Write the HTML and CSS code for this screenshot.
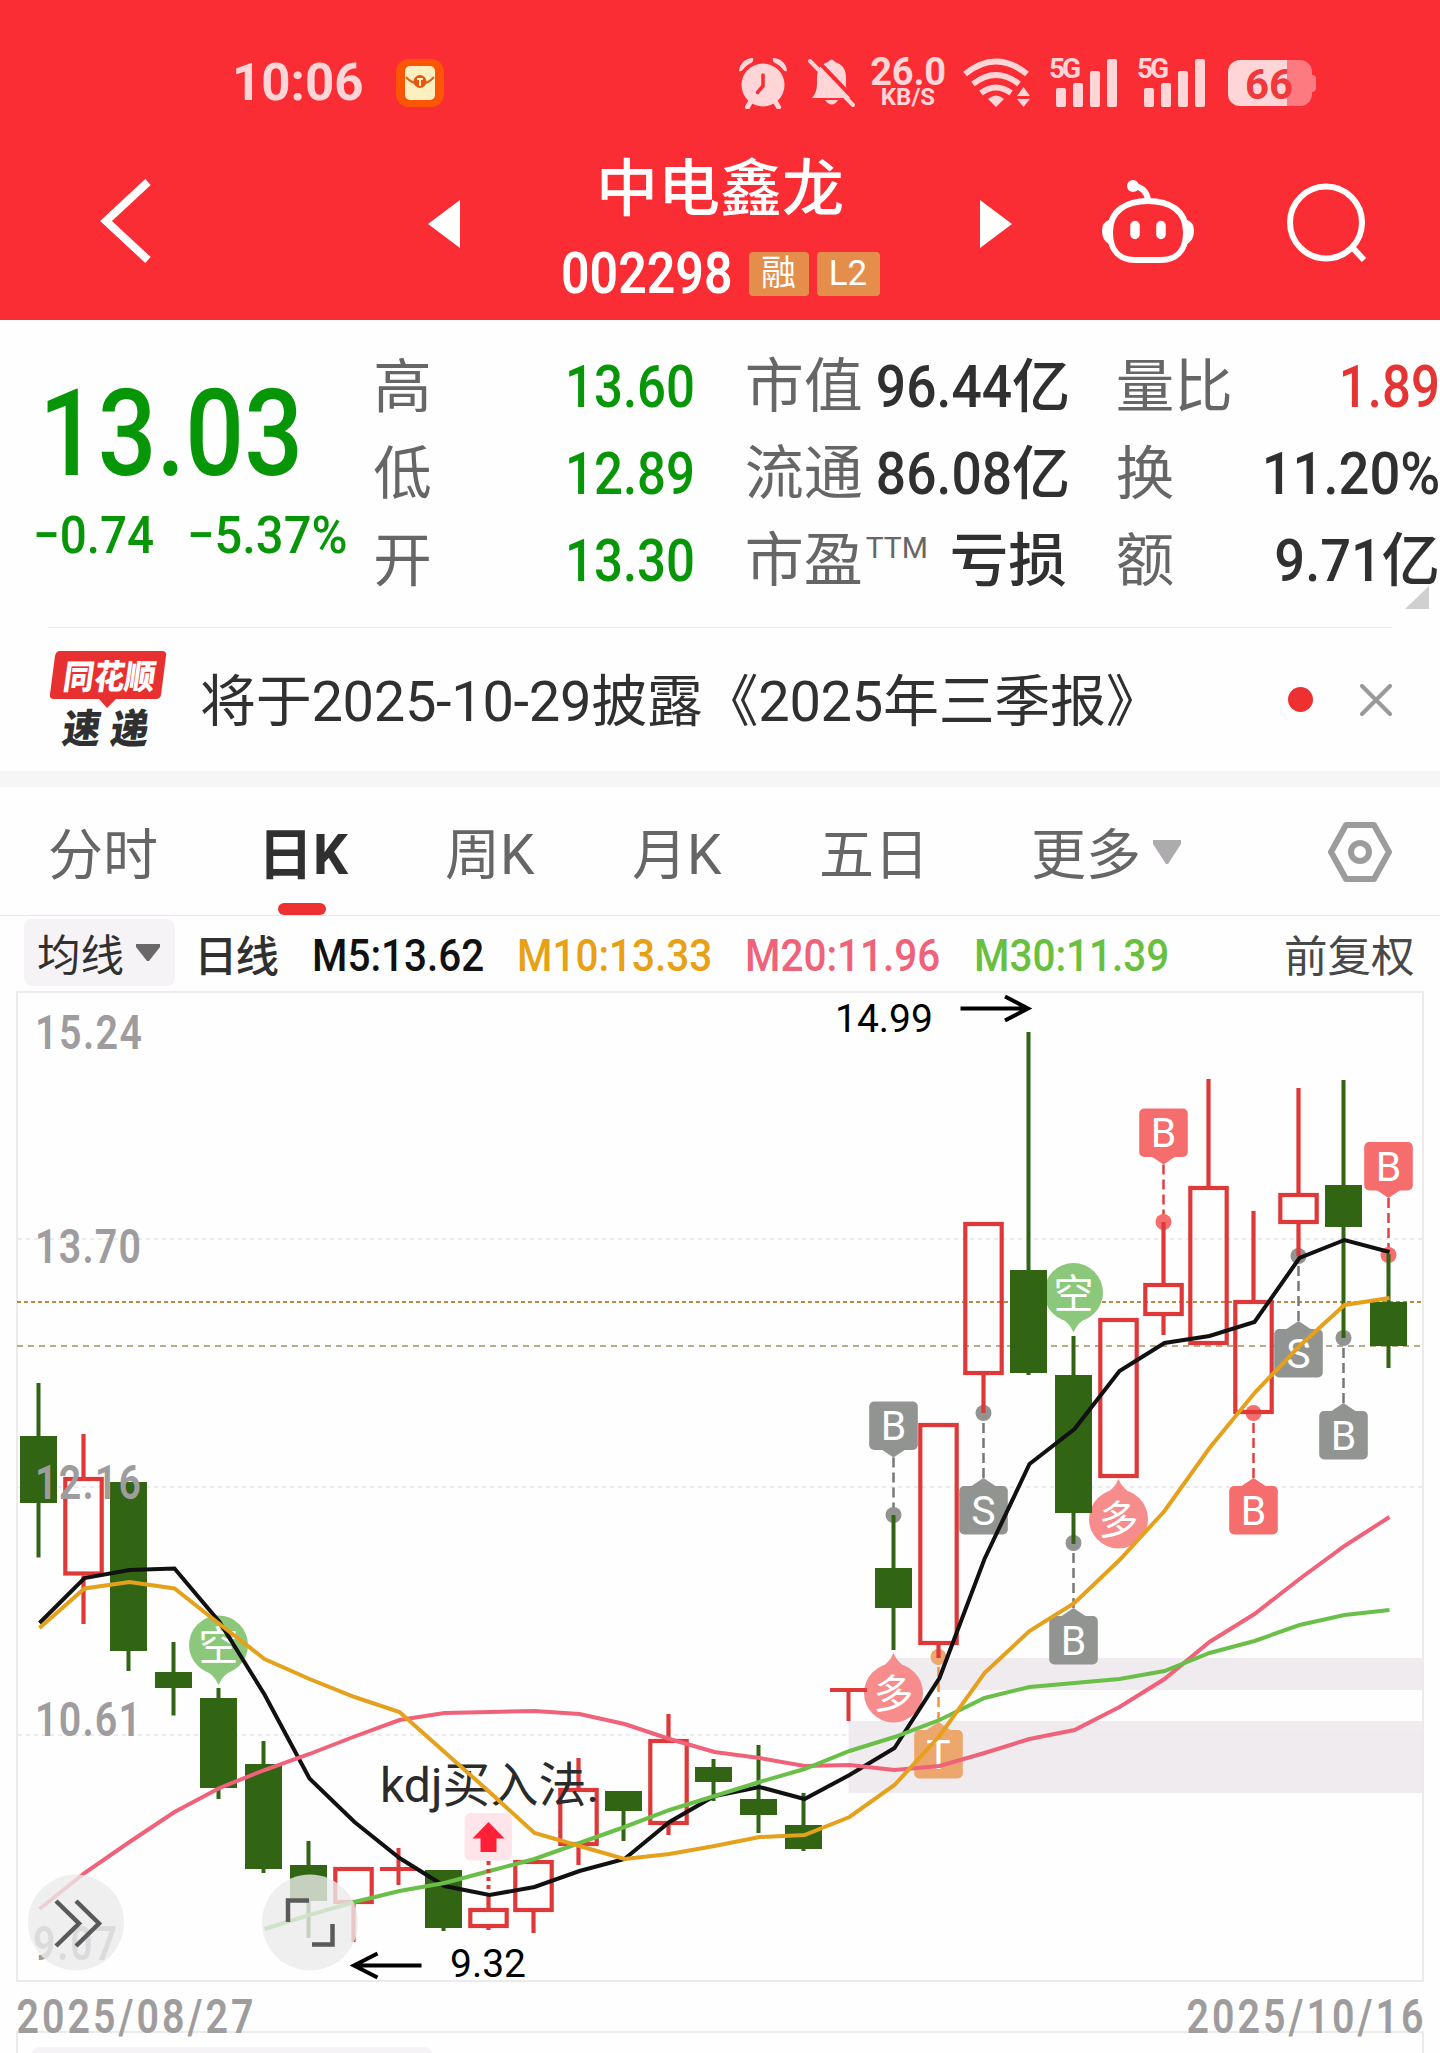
FILE: index.html
```html
<!DOCTYPE html>
<html lang="zh-CN">
<head>
<meta charset="utf-8">
<title>中电鑫龙 002298</title>
<link rel="stylesheet" href="styles.css">
</head>
<body>
<header class="header">
  <div class="status">
    <span class="clock">10:06</span>
    <svg class="app" width="48" height="48" viewBox="0 0 48 48"><rect width="48" height="48" rx="13" fill="#fb5607"/><rect x="9" y="7" width="30" height="34" rx="5" fill="#fdf0c0"/><path d="M10 18Q16 25 24 25T38 18" fill="none" stroke="#d9631d" stroke-width="2"/><circle cx="24" cy="22.500" r="6.500" fill="#e8560c"/><path d="M21 20H27M24 20V27" stroke="#fdf0c0" stroke-width="2"/></svg>
    <svg class="alarm" width="50" height="52" viewBox="0 0 50 52"><g fill="#ffd5d7"><circle cx="25" cy="28" r="21.500"/><path d="M1 14A14 14 0 0 1 15 1Q16 5 12 6.500Q7 9 4.500 13Q3 15 1 14ZM49 14A14 14 0 0 0 35 1Q34 5 38 6.500Q43 9 45.500 13Q47 15 49 14Z"/></g><path d="M13 44L9.500 50M37 44L40.500 50" stroke="#ffd5d7" stroke-width="5" stroke-linecap="round"/><path d="M25 18V29L19.500 35.500" fill="none" stroke="#f92d33" stroke-width="3.500" stroke-linecap="round"/></svg>
    <svg class="bell" width="50" height="50" viewBox="0 0 50 50"><path d="M5 40Q10 34 10 26V20Q10 7 21 4Q25-1 28 4Q39 7 39 20V27Q39 34 44 40ZM18 42H31Q25 51 18 42Z" fill="#ffd5d7"/><path d="M6-2L51 45" stroke="#f92d33" stroke-width="4"/><path d="M3 3L46 47" stroke="#ffd5d7" stroke-width="4" stroke-linecap="round"/></svg>
    <div class="speed"><b>26.0</b><small>KB/S</small></div>
    <svg class="wifi" width="68" height="50" viewBox="0 0 68 50"><g fill="none" stroke="#ffd5d7" stroke-width="6"><path d="M2 16Q33-9 64 16M10 26Q33 8 56 26M18 35Q33 24 48 35"/></g><path d="M25 41Q33 34 41 41L33 49ZM54 38L60.500 29L67 38ZM54 41H67L60.500 49Z" fill="#ffd5d7"/></svg>
    <div class="signal"><small>5G</small><svg width="62" height="50" viewBox="0 0 62 50" fill="#ffd5d7"><rect x="0" y="30" width="10" height="19" rx="2"/><rect x="17" y="25" width="10" height="24" rx="2"/><rect x="34" y="13" width="10" height="36" rx="2"/><rect x="51" y="1" width="10" height="48" rx="2"/></svg></div>
    <div class="signal"><small>5G</small><svg width="62" height="50" viewBox="0 0 62 50" fill="#ffd5d7"><rect x="0" y="30" width="10" height="19" rx="2"/><rect x="17" y="25" width="10" height="24" rx="2"/><rect x="34" y="13" width="10" height="36" rx="2"/><rect x="51" y="1" width="10" height="48" rx="2"/></svg></div>
    <div class="battery">66</div><span class="nub"></span>
  </div>
  <nav class="nav">
    <svg class="back" width="60" height="96" viewBox="0 0 60 96"><path d="M52 9L10 48L52 87" fill="none" stroke="#fff" stroke-width="8"/></svg>
    <svg class="prev" width="32" height="48" viewBox="0 0 32 48"><path d="M32 0V48L0 24Z" fill="#fff"/></svg>
    <div class="stock">
      <h1>中电鑫龙</h1>
      <div class="code"><span class="digits">002298</span><span class="tag">融</span><span class="tag l2">L2</span></div>
    </div>
    <svg class="next" width="32" height="48" viewBox="0 0 32 48"><path d="M0 0L32 24L0 48Z" fill="#fff"/></svg>
    <svg class="robot" width="94" height="86" viewBox="0 0 94 86"><g fill="none" stroke="#fff" stroke-width="6"><path d="M47 22C68 22 85 31 85 53C85 73 74 81 60 81H34C20 81 9 73 9 53C9 31 26 22 47 22Z"/><path d="M31 7Q46 8 47 22"/></g><circle cx="32" cy="7" r="6" fill="#fff"/><path d="M34 46.500V55.500M60 46.500V55.500" stroke="#fff" stroke-width="9.500" stroke-linecap="round"/><path d="M8 41Q1 43 1 52T8 65ZM86 41Q93 43 93 52T86 65Z" fill="#fff"/></svg>
    <svg class="search" width="84" height="84" viewBox="0 0 84 84"><circle cx="42" cy="41.500" r="36" fill="none" stroke="#fff" stroke-width="6"/><path d="M67 65L80 79" stroke="#fff" stroke-width="6"/></svg>
  </nav>
</header>

<section class="quote">
  <div class="last">
    <div class="price">13.03</div>
    <div class="change"><span>−0.74</span><span class="percent">−5.37%</span></div>
  </div>
  <dl class="stats c1">
    <div><dt>高</dt><dd class="down"><i>13.60</i></dd></div>
    <div><dt>低</dt><dd class="down"><i>12.89</i></dd></div>
    <div><dt>开</dt><dd class="down"><i>13.30</i></dd></div>
  </dl>
  <dl class="stats c2">
    <div><dt>市值</dt><dd><i>96.44</i>亿</dd></div>
    <div><dt>流通</dt><dd><i>86.08</i>亿</dd></div>
    <div><dt>市盈<sup>TTM</sup></dt><dd class="loss">亏损</dd></div>
  </dl>
  <dl class="stats c3">
    <div><dt>量比</dt><dd class="up"><i>1.89</i></dd></div>
    <div><dt>换</dt><dd><i class="wide">11.20%</i></dd></div>
    <div><dt>额</dt><dd><i class="wide">9.71</i>亿</dd></div>
  </dl>
  <span class="corner"></span>
</section>

<section class="news">
  <svg class="logo" width="120" height="98" viewBox="0 0 120 98"><path d="M12 0H114Q119 0 118 5L113 44Q112 48 108 48H68L59 57L51 48H6Q1 48 2 43L7 5Q8 0 12 0Z" fill="#e93030"/><g class="logo-text"><text transform="translate(14 38) skewX(-8)" font-size="34" textLength="92" lengthAdjust="spacingAndGlyphs" fill="#fff">同花顺</text><text transform="translate(13 92) skewX(-8)" font-size="40" textLength="38" lengthAdjust="spacingAndGlyphs" fill="#303030">速</text><text transform="translate(61 92) skewX(-8)" font-size="40" textLength="38" lengthAdjust="spacingAndGlyphs" fill="#303030">递</text></g></svg>
  <p>将于2025-10-29披露《2025年三季报》</p>
  <span class="dot"></span>
  <svg class="close" width="32" height="32" viewBox="0 0 32 32"><path d="M2 2L30 30M30 2L2 30" stroke="#999" stroke-width="4" stroke-linecap="round"/></svg>
</section>

<nav class="tabs">
  <span>分时</span><span class="active">日K</span><span>周K</span><span>月K</span><span>五日</span>
  <span class="more">更多<svg width="28" height="24" viewBox="0 0 28 24"><path d="M0 0H28V4L15 24H13L0 4Z" fill="#aeabae"/></svg></span>
  <svg class="gear" width="64" height="62" viewBox="0 0 64 62"><path d="M18 4H46L61 31L46 58H18L3 31Z" fill="none" stroke="#9c9c9c" stroke-width="6" stroke-linejoin="round"/><circle cx="32" cy="31" r="9" fill="none" stroke="#9c9c9c" stroke-width="6"/></svg>
</nav>

<div class="averages">
  <span class="picker">均线<svg width="24" height="17" viewBox="0 0 24 17"><path d="M0 0H24V3L13 17H11L0 3Z" fill="#6b6869"/></svg></span>
  <span class="period">日线</span>
  <span class="ma m5">M5:13.62</span><span class="ma m10">M10:13.33</span><span class="ma m20">M20:11.96</span><span class="ma m30">M30:11.39</span>
  <span class="adjust">前复权</span>
</div>
<svg class="chart" id="chart" width="1440" height="1064" viewBox="0 989 1440 1064"></svg>
<script src="chart.js"></script>
</body>
</html>
```
FILE: styles.css
```css
* { box-sizing: border-box; margin: 0; padding: 0; }
body { width: 1440px; height: 2053px; overflow: hidden; background: #fefefe; color: #303030; font-family: Roboto, "Noto Sans CJK SC", sans-serif; }
svg { display: block; flex: none; }
i { font-style: normal; }

.header { height: 320px; background: #f92d33; color: #fff; }
.status { display: flex; align-items: center; height: 120px; padding: 46px 0 0 232px; color: #ffd5d7; }
.clock { width: 164px; font-size: 51px; font-weight: 700; line-height: 62px; }
.alarm { margin-left: 294px; }
.bell { margin-left: 19px; }
.speed { display: flex; flex-direction: column; align-items: center; width: 80px; margin-left: 11px; }
.speed b { font-size: 38px; line-height: 28px; letter-spacing: -0.2px; }
.speed small { font-size: 24px; font-weight: 700; line-height: 22px; }
.wifi { margin-left: 15px; }
.signal { display: grid; width: 70px; margin-left: 18px; }
.signal + .signal { margin-left: 18px; }
.signal small, .signal svg { grid-area: 1 / 1; }
.signal small { font-size: 28px; font-weight: 700; line-height: 22px; letter-spacing: -3px; }
.signal svg { margin-left: 7px; }
.battery { width: 84px; height: 46px; margin-left: 21px; padding-left: 17px; color: #f0383d; font-size: 42px; font-weight: 700; line-height: 49px; background: linear-gradient(90deg, #ffd5d7 59px, #fc7a80 59px); border-radius: 12px; }
.nub { width: 4px; height: 17px; border-radius: 0 4px 4px 0; background: #fc7a80; }

.nav { display: flex; align-items: flex-start; height: 200px; }
.back { margin: 53px 1px 0 96px; }
.prev { margin: 80px 0 0 271px; }
.next { margin-top: 80px; }
.robot { margin: 59px 0 0 89px; }
.search { margin: 61px 0 0 89px; }
.stock { width: 520px; padding-top: 30px; }
.stock h1 { font-size: 62px; font-weight: 500; line-height: 80px; text-align: center; }
.code { display: flex; justify-content: center; align-items: center; height: 87px; }
.digits { width: 184px; font-size: 57.5px; font-weight: 600; line-height: 68px; transform: scaleX(.87); transform-origin: 0 50%; white-space: nowrap; }
.tag { width: 60px; height: 44px; margin-left: 4px; border-radius: 4px; background: #e58e4c; font-size: 35px; line-height: 44px; text-align: center; }
.tag.l2 { width: 63px; margin-left: 8px; }

.quote { position: relative; display: flex; height: 307px; padding-top: 23px; }
.last { width: 374px; padding-top: 26px; color: #079607; font-weight: 500; white-space: nowrap; }
.price { padding-left: 39px; font-size: 121px; line-height: 130px; transform: scaleX(.855); transform-origin: 39px 50%; }
.change { display: flex; padding-left: 33px; font-size: 52px; line-height: 73px; }
.change span { width: 154px; transform: scaleX(.915); transform-origin: 0 50%; }
.change .percent { transform: scaleX(.94); }
.stats > div { display: flex; justify-content: space-between; height: 87px; line-height: 88px; font-size: 58.5px; white-space: nowrap; }
.stats dt { color: #666; }
.stats dd { font-weight: 500; }
.stats i { display: inline-block; font-size: 60px; transform: scaleX(.89); transform-origin: 100% 50%; }
.c1 { width: 322px; }
.c2 { width: 320px; margin-left: 50px; }
.c3 { width: 325px; margin-left: 51px; }
.stats .down i, .stats .up i { transform: scaleX(.85); }
.stats .wide { transform: scaleX(.905); }
.c2 dt { width: 114px; font-size: 59px; }
.c2 dd { margin-right: 2px; }
.c2 .loss { margin-right: -2px; }
.stats sup { display: inline-block; height: 20px; padding-left: 3px; font-size: 30px; line-height: 20px; vertical-align: 23px; }
.down { color: #079607; }
.up { color: #e43434; }
.corner { position: absolute; right: 11px; bottom: 18px; border-left: 24px solid transparent; border-bottom: 23px solid #d0d0d0; }

.news { display: flex; align-items: center; height: 144px; margin: 0 48px; border-top: 1px solid #ebebeb; }
.logo { overflow: visible; }
.logo-text { font-family: "Noto Sans CJK SC", sans-serif; font-weight: 900; }
.news p { width: 1088px; margin-left: 32px; padding-top: 5px; font-size: 56px; line-height: 80px; letter-spacing: -0.3px; white-space: nowrap; }
.dot { width: 25px; height: 25px; border-radius: 50%; background: #ee3030; }
.close { margin-left: 47px; }

.tabs { display: grid; grid-template-columns: 210px 187px 187px 187px 212px 297px 64px; align-items: center; height: 145px; padding-left: 48px; border-top: 16px solid #f6f6f6; border-bottom: 1px solid #e8e8e8; color: #666; font-size: 55px; line-height: 128px; }
.tabs > span { padding-top: 4px; }
.tabs .active { position: relative; color: #303030; font-weight: 700; }
.active::after { content: ""; position: absolute; left: 20px; bottom: 4px; width: 48px; height: 12px; border-radius: 6px; background: #ee3030; }
.more { display: flex; align-items: center; gap: 12px; }
.more svg { margin-top: -6px; }
.gear { margin-top: -3px; }

.averages { display: grid; grid-template-columns: 170px 118px 205px 228px 229px 310px auto; align-items: center; height: 73px; padding-left: 24px; font-size: 43.5px; white-space: nowrap; }
.picker { display: flex; align-items: center; gap: 12px; width: 151px; height: 67px; padding-left: 13px; border-radius: 8px; background: #f6f3f7; }
.period { padding-top: 2px; font-weight: 500; letter-spacing: -2px; }
.ma { padding-top: 6px; font-size: 44px; font-weight: 500; transform: scaleX(.92); transform-origin: 0 50%; }
.m5 { color: #111; }
.m10 { color: #e8a015; }
.m20 { color: #f0627a; }
.m30 { color: #68c03e; }
.adjust { padding-top: 2px; color: #484848; }

.chart { font-family: Roboto, "Noto Sans CJK SC", sans-serif; }
.axis { fill: #9f9c9e; font-size: 48px; font-weight: 600; }
.note { fill: #000; font-size: 39px; }
.signal-name { fill: #2b2b2b; font-size: 48px; }
.flag { fill: #fff; font-size: 41px; text-anchor: middle; }
.drop { fill: #fff; font-size: 40px; text-anchor: middle; }
```
FILE: chart.js
```js
const X = i => 38.5 + 45 * i;
const out = [];
const add = s => out.push(s);

// [kind, high, body top, body bottom, low]; g = falling, r = rising
const candles = [
  ['g',1383,1436,1503,1557.5],['r',1434,1477,1575.5,1624],['g',1482,1482,1651,1671],['g',1642,1672,1688,1715.5],
  ['g',1688,1698,1788,1799],['g',1741,1764,1869,1873],['g',1841,1865,1901,1938],['r',1867,1867,1904,1942],
  ['x',1848,1869,1869,1885],['g',1870,1870,1928,1931],['r',1895,1908,1928,1930],['r',1860,1860,1912,1933],
  ['r',1758,1788,1846,1865],['g',1791,1791,1811,1841],['r',1714,1739,1825,1835],['g',1759,1767,1782,1801],
  ['g',1745,1799,1815,1833],['g',1793,1825,1849,1851],['x',1690,1690,1690,1721],['g',1515,1568,1608,1650],
  ['r',1423,1423,1645,1658],['r',1222,1222,1375,1413],['g',1032,1270,1373,1375],['g',1336,1375,1513,1544],
  ['r',1318,1318,1478,1478],['r',1222,1283,1316,1335],['r',1079,1186,1345,1345],['r',1211,1300,1414,1414],
  ['r',1088,1193,1224,1256],['g',1080,1185,1227,1338],['g',1254,1302,1346,1368]
];
const averages = [
  ['#111', 0, [1623,1578,1570,1568.5,1622,1694.5,1778.5,1822,1858,1886,1895,1887,1871,1859,1822,1796,1787,1799,1775,1748,1678,1559,1464,1429,1371,1343,1336,1322,1258,1240,1252]],
  ['#f0627a', 0, [1909,1873,1842,1812,1788,1770,1754,1736.5,1720,1713,1712,1711,1714,1724,1739,1752,1758,1766,1765,1770,1766,1753,1739,1730,1707,1679,1642,1614,1579,1546,1517]],
  ['#6abf48', 5, [1929,1915,1902,1891,1883,1871,1859,1843,1827,1810,1796,1782,1769,1751,1737,1720,1698,1687,1683,1679,1671,1653,1641,1625,1615,1610]],
  ['#e5a01c', 0, [1628,1588.5,1582,1588.5,1624,1659,1679,1697,1712,1752,1792,1833,1846,1859,1854,1846,1837,1835,1817,1785,1736,1673,1631,1603,1560,1511,1448,1393,1346,1305,1298]]
];
// [letter, candle, box top, dot y, colours]
const GREY = ['#929491', '#777'], RED = ['#f66d6d', '#e04040'], ORANGE = ['#eda66b', '#ee9440'];
const flags = [
  ['B',19,1401.5,1515,GREY],['S',21,1486,1413,GREY],['B',23,1616,1543,GREY],['T',20,1730,1657,ORANGE],
  ['B',25,1108.5,1222,RED],['B',27,1486,1413,RED],['S',28,1329,1256,GREY],['B',29,1411,1338,GREY],['B',30,1142,1255,RED]
];

// frames, bands and grid
add('<path d="M893.500 1658H1423V1690H893.500ZM848.500 1721H1423V1793H848.500Z" fill="#efebef"/>');
add('<g fill="none" stroke="#ebebeb" stroke-width="2"><rect x="17" y="992" width="1406" height="989"/><path d="M17 2060V2032H1423V2060"/><path d="M18 1239H1422M18 1487H1422M18 1735H1422" stroke-dasharray="4 4"/></g>');
add('<path d="M32 2055V2055Q32 2047 40 2047H424Q432 2047 432 2055Z" fill="#f5f3f6"/>');
add('<path d="M17 1302H1422" stroke="#bd8643" stroke-width="2" stroke-dasharray="4 3"/><path d="M17 1346H1423" stroke="#b7ac83" stroke-width="2" stroke-dasharray="6 5"/>');

// round sentiment drops
const drop = (i, cy, up, colour, ch) => {
  const s = up ? -1 : 1, x = X(i);
  add(`<g fill="${colour}"><circle cx="${x}" cy="${cy}" r="29.500"/><path d="M${x-15} ${cy+s*24}Q${x-4} ${cy+s*30} ${x} ${cy+s*40}Q${x+4} ${cy+s*30} ${x+15} ${cy+s*24}Z"/></g><text class="drop" x="${x}" y="${cy+15}">${ch}</text>`);
};
drop(4, 1645, false, '#8cc87c', '空');
drop(23, 1292.5, false, '#8cc87c', '空');
drop(19, 1693, true, '#f78c8c', '多');
drop(24, 1519, true, '#f78c8c', '多');

for (const [ch, i, top, dot, [fill, dash]] of flags) {
  const x = X(i), above = top < dot, edge = above ? top + 48 : top, tip = edge + (above ? 8 : -8);
  add(`<path d="M${x} ${tip}V${dot}" stroke="${dash}" stroke-width="2.500" stroke-dasharray="10 5"/>`);
  add(`<circle cx="${x}" cy="${dot}" r="8" fill="${fill}"/><rect x="${x-24.3}" y="${top}" width="48.600" height="48.500" rx="5" fill="${fill}"/><path d="M${x-12} ${edge}L${x} ${tip}L${x+12} ${edge}Z" fill="${fill}"/><text class="flag" x="${x}" y="${top+38.5}">${ch}</text>`);
}

candles.forEach(([k, hi, top, bot, lo], i) => {
  const x = X(i);
  if (k === 'g') {
    add(`<path d="M${x} ${hi}V${lo}" stroke="#316413" stroke-width="4"/><rect x="${x-18.5}" y="${top}" width="37" height="${bot-top}" fill="#316413"/>`);
  } else if (k === 'r') {
    add(`<g fill="none" stroke="#de3838" stroke-width="4.200"><path d="M${x} ${hi}V${top}M${x} ${bot}V${lo}"/><rect x="${x-18.2}" y="${top+2}" width="36.400" height="${bot-top-4}"/></g>`);
  } else {
    add(`<path d="M${x} ${hi}V${lo}M${x-18.5} ${top}H${x+18.5}" stroke="#de3838" stroke-width="4"/>`);
  }
});

// axis labels: narrow digits with open spacing
const label = (s, x, y, w) => add(`<text class="axis" transform="translate(${x} ${y}) scale(.82 1)" textLength="${w / .82}" lengthAdjust="spacing">${s}</text>`);
label('15.24', 35, 1049, 107);
label('13.70', 35, 1263, 106);
label('12.16', 35, 1499, 106);
label('10.61', 35, 1735.5, 106);
label('9.07', 33, 1960, 84);
label('2025/08/27', 16.5, 2033, 237);
label('2025/10/16', 1186.5, 2033, 237);

add('<text class="signal-name" x="380" y="1802">kdj买入法.</text>');
for (const [colour, first, ys] of averages) {
  add(`<polyline fill="none" stroke="${colour}" stroke-width="4" points="${ys.map((y, j) => `${X(j + first) + 1},${y}`).join(' ')}"/>`);
}

// buy signal
add('<rect x="464.500" y="1813" width="47.500" height="47.500" rx="6" fill="#ffe5ea"/><path d="M488.500 1822L504.500 1838.500H496.500V1852H480.500V1838.500H472.500Z" fill="#ff2038"/><path d="M488.500 1861V1892" stroke="#de3838" stroke-width="4" stroke-dasharray="4 4"/>');

// high and low callouts
add('<g fill="none" stroke="#000" stroke-width="4"><path d="M960.500 1008.500H1028M1005 996.500L1028 1008.500L1005 1020.500M421.500 1965.500H354M377.500 1953.500L354 1965.500L377.500 1977.500"/></g>');
add('<text class="note" x="835" y="1031.500">14.99</text><text class="note" x="450" y="1976.500">9.32</text>');

// floating buttons
add('<g fill="#ebebeb" fill-opacity=".8"><circle cx="76" cy="1922.500" r="48"/><circle cx="310" cy="1922.500" r="48"/></g>');
add('<g fill="none" stroke="#5a5a5a" stroke-width="4.500"><path d="M56 1901L79 1923.500L56 1946M76 1901L99 1923.500L76 1946M288 1922V1900.500H309M312 1944.500H332.500V1924"/></g>');

document.getElementById('chart').innerHTML = out.join('');
```
